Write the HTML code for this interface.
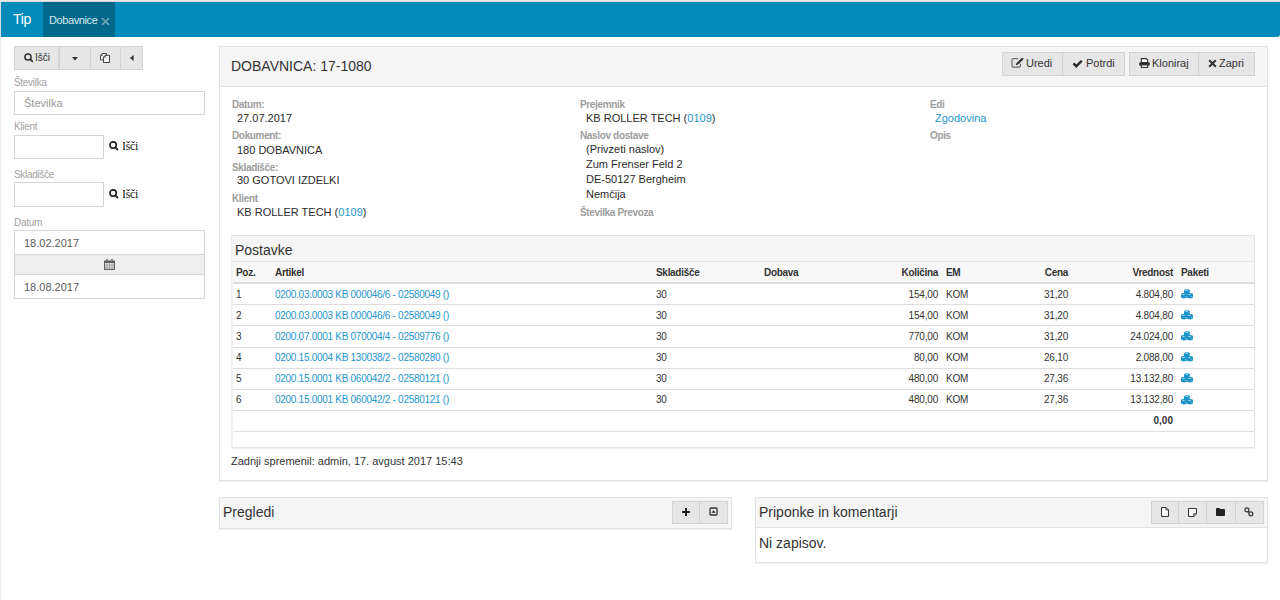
<!DOCTYPE html>
<html><head><meta charset="utf-8">
<style>
*{box-sizing:border-box;margin:0;padding:0}
html,body{width:1280px;height:600px;overflow:hidden;background:#fff}
body{font-family:"Liberation Sans",sans-serif;color:#333;position:relative}
.abs{position:absolute}
#frameTop{left:0;top:0;width:1280px;height:2px;background:#e9e9e9;border-bottom:1px solid #dcd9d6}
#frameLeft{left:0;top:0;width:1px;height:600px;background:#ebebeb}
#frameLeftNav{left:0;top:2px;width:1px;height:35px;background:#cfdde2}
#nav{left:1px;top:2px;width:1279px;height:35px;background:#018bbb;border-bottom-right-radius:3px}
#navTip{left:13px;top:2.4px;height:35px;line-height:35px;font-size:14px;color:#fff;letter-spacing:-0.3px}
#tab{left:43px;top:2px;width:72px;height:35px;background:#00688b}
#tabTxt{left:49px;top:3px;line-height:35px;font-size:11px;color:#d8ebf2;letter-spacing:-0.4px}
.btn{position:absolute;background:#e6e6e6;border:1px solid #d2d2d2;}
.lbl{position:absolute;font-size:10px;color:#999;white-space:nowrap}
.inp{position:absolute;border:1px solid #d6d6d6;background:#fff}
.ph{position:absolute;font-size:12px;color:#999;white-space:nowrap}
.panel{position:absolute;border:1px solid #e3e3e3;background:#fff;box-shadow:0 1px 1px rgba(0,0,0,.05)}
.ph-head{position:absolute;background:#f5f5f5;border-bottom:1px solid #e3e3e3}
.t{position:absolute;white-space:nowrap}
.dl{font-size:10px;font-weight:bold;color:#9d9d9d;letter-spacing:-0.35px}
.dv{font-size:11px;color:#2b2b2b}
a,.lnk{color:#2496cd;text-decoration:none}
</style></head><body>
<div id="frameTop" class="abs"></div>
<div id="frameLeft" class="abs"></div>
<div id="frameLeftNav" class="abs"></div>
<div id="nav" class="abs"></div>
<div id="navTip" class="abs">Tip</div>
<div id="tab" class="abs"></div>
<div id="tabTxt" class="abs">Dobavnice</div>
<svg class="abs" style="left:101px;top:16.6px" width="9" height="9" viewBox="0 0 9 9"><path d="M1 1L8 8M8 1L1 8" stroke="#77a8bc" stroke-width="1.6"/></svg>


<!-- SIDEBAR -->
<div class="btn" style="left:14px;top:46px;width:45px;height:24px"></div>
<div class="btn" style="left:59px;top:46px;width:32px;height:24px"></div>
<div class="btn" style="left:90px;top:46px;width:31px;height:24px"></div>
<div class="btn" style="left:120px;top:46px;width:23px;height:24px"></div>
<svg class="abs" style="left:24px;top:53px" width="10" height="10" viewBox="0 0 10 10"><circle cx="4" cy="4" r="3.1" fill="none" stroke="#333" stroke-width="1.5"/><path d="M6.2 6.2L8.8 8.8" stroke="#333" stroke-width="1.7"/></svg>
<div class="t" style="left:35px;top:52px;font-size:10px;line-height:12px;color:#333">Išči</div>
<svg class="abs" style="left:72px;top:56.8px" width="6" height="4" viewBox="0 0 6 4"><path d="M0 0H6L3 3.6Z" fill="#333"/></svg>
<svg class="abs" style="left:100px;top:53px" width="11" height="10" viewBox="0 0 11 10"><path d="M2.3 0.5H6.5V6.9H0.5V2.3Z" fill="#f0f0f0" stroke="#444" stroke-width="1"/><path d="M2.3 0.5V2.3H0.5" fill="none" stroke="#444" stroke-width="0.8"/><path d="M5.3 2.3H9.5V9.5H3.5V4.1Z" fill="#f4f4f4" stroke="#444" stroke-width="1"/><path d="M5.3 2.3V4.1H3.5" fill="none" stroke="#444" stroke-width="0.8"/></svg>
<svg class="abs" style="left:129.5px;top:55px" width="4" height="6" viewBox="0 0 4 6"><path d="M3.6 0V6L0 3Z" fill="#333"/></svg>

<div class="t" style="left:14px;top:77px;font-size:10px;line-height:12px;color:#a3a3a3;letter-spacing:-0.3px">Številka</div>
<div class="inp" style="left:14px;top:91px;width:191px;height:24px"></div>
<div class="t" style="left:24px;top:96px;font-size:11px;line-height:14px;color:#999">Številka</div>

<div class="t" style="left:14px;top:121px;font-size:10px;line-height:12px;color:#a3a3a3;letter-spacing:-0.3px">Klient</div>
<div class="inp" style="left:14px;top:135px;width:90px;height:24px"></div>
<svg class="abs" style="left:109px;top:141px" width="10" height="10" viewBox="0 0 10 10"><circle cx="4.1" cy="4.1" r="3.2" fill="none" stroke="#222" stroke-width="1.6"/><path d="M6.3 6.3L9 9" stroke="#222" stroke-width="1.8"/></svg>
<div class="t" style="left:122px;top:139px;font-family:'Liberation Serif',serif;font-size:12px;line-height:14px;color:#222;letter-spacing:-0.3px">Išči</div>

<div class="t" style="left:14px;top:169px;font-size:10px;line-height:12px;color:#a3a3a3;letter-spacing:-0.3px">Skladišče</div>
<div class="inp" style="left:14px;top:182px;width:90px;height:25px"></div>
<svg class="abs" style="left:109px;top:189px" width="10" height="10" viewBox="0 0 10 10"><circle cx="4.1" cy="4.1" r="3.2" fill="none" stroke="#222" stroke-width="1.6"/><path d="M6.3 6.3L9 9" stroke="#222" stroke-width="1.8"/></svg>
<div class="t" style="left:122px;top:187px;font-family:'Liberation Serif',serif;font-size:12px;line-height:14px;color:#222;letter-spacing:-0.3px">Išči</div>

<div class="t" style="left:14px;top:217px;font-size:10px;line-height:12px;color:#a3a3a3;letter-spacing:-0.3px">Datum</div>
<div class="inp" style="left:14px;top:230px;width:191px;height:25px"></div>
<div class="t" style="left:24px;top:235.6px;font-size:11px;line-height:14px;color:#5c5c5c">18.02.2017</div>
<div class="abs" style="left:14px;top:254px;width:191px;height:21px;background:#eee;border:1px solid #d6d6d6"></div>
<svg class="abs" style="left:104px;top:259px" width="11" height="11" viewBox="0 0 11 11"><rect x="0.6" y="2.2" width="9.8" height="8.2" fill="#f2f2f2" stroke="#5a5a5a" stroke-width="1.1"/><rect x="0.6" y="2.2" width="9.8" height="1.8" fill="#5a5a5a"/><path d="M2.2 3V1.3Q2.2 0.4 3.1 0.4Q4 0.4 4 1.3V3M7 3V1.3Q7 0.4 7.9 0.4Q8.8 0.4 8.8 1.3V3" fill="none" stroke="#5a5a5a" stroke-width="0.9"/><path d="M3 4V10M5.5 4V10M8 4V10M1 6H10M1 8.2H10" stroke="#8a8a8a" stroke-width="0.7"/></svg>
<div class="inp" style="left:14px;top:274px;width:191px;height:25px"></div>
<div class="t" style="left:24px;top:279.6px;font-size:11px;line-height:14px;color:#5c5c5c">18.08.2017</div>


<!-- MAIN PANEL -->
<div class="panel" style="left:219px;top:46px;width:1049px;height:435px"></div>
<div class="ph-head" style="left:220px;top:47px;width:1047px;height:40px"></div>
<div class="t" style="left:231px;top:58px;font-size:14px;line-height:16px;color:#333">DOBAVNICA: 17-1080</div>

<div class="btn" style="left:1002px;top:52px;width:61px;height:24px"></div>
<div class="btn" style="left:1062px;top:52px;width:63px;height:24px"></div>
<div class="btn" style="left:1129px;top:52px;width:70px;height:24px"></div>
<div class="btn" style="left:1198px;top:52px;width:57px;height:24px"></div>
<svg class="abs" style="left:1011px;top:57px" width="13" height="11" viewBox="0 0 13 11"><path d="M7 1.6H2.3Q1 1.6 1 2.9V8.8Q1 10.1 2.3 10.1H8.2Q9.5 10.1 9.5 8.8V6.8" fill="none" stroke="#6a6a6a" stroke-width="1.2"/><path d="M4.8 8.2L5.3 6.2L10.6 0.9Q11.1 0.5 11.6 0.9L12.3 1.6Q12.7 2.1 12.3 2.6L7 7.8Z" fill="#333"/><path d="M5.6 6.6L6.5 7.5" stroke="#aaa" stroke-width="0.7"/></svg>
<div class="t" style="left:1026px;top:57px;font-size:11px;line-height:13px;color:#333">Uredi</div>
<svg class="abs" style="left:1072px;top:58.5px" width="11" height="10" viewBox="0 0 11 10"><path d="M0.6 5.2L2.3 3.5L4.3 5.5L8.9 0.9L10.6 2.6L4.3 8.9Z" fill="#2a2a2a"/></svg>
<div class="t" style="left:1086px;top:57px;font-size:11px;line-height:13px;color:#333">Potrdi</div>
<svg class="abs" style="left:1138.5px;top:58px" width="11" height="10" viewBox="0 0 11 10"><path d="M2.3 0.6H7.2L8.7 2.1V4.6H2.3Z" fill="#fff" stroke="#333" stroke-width="1.1"/><path d="M1.2 4.3H9.8Q10.7 4.3 10.7 5.2V7.4H0.3V5.2Q0.3 4.3 1.2 4.3Z" fill="#2a2a2a"/><rect x="2.3" y="6.9" width="6.4" height="2.5" fill="#fff" stroke="#333" stroke-width="1.1"/></svg>
<div class="t" style="left:1152px;top:57px;font-size:11px;line-height:13px;color:#333">Kloniraj</div>
<svg class="abs" style="left:1208px;top:59px" width="9" height="9" viewBox="0 0 9 9"><path d="M1.2 1.2L7.8 7.8M7.8 1.2L1.2 7.8" stroke="#333" stroke-width="2"/></svg>
<div class="t" style="left:1219px;top:57px;font-size:11px;line-height:13px;color:#333">Zapri</div>

<!-- details -->
<div class="t dl" style="left:232px;top:99px;line-height:12px">Datum:</div>
<div class="t dv" style="left:237px;top:112px;line-height:13px">27.07.2017</div>
<div class="t dl" style="left:232px;top:130px;line-height:12px">Dokument:</div>
<div class="t dv" style="left:237px;top:143.5px;line-height:13px">180 DOBAVNICA</div>
<div class="t dl" style="left:232px;top:161.5px;line-height:12px">Skladišče:</div>
<div class="t dv" style="left:237px;top:174px;line-height:13px">30 GOTOVI IZDELKI</div>
<div class="t dl" style="left:232px;top:193px;line-height:12px">Klient</div>
<div class="t dv" style="left:237px;top:206px;line-height:13px">KB ROLLER TECH (<span class="lnk">0109</span>)</div>

<div class="t dl" style="left:580px;top:99px;line-height:12px">Prejemnik</div>
<div class="t dv" style="left:586px;top:112px;line-height:13px">KB ROLLER TECH (<span class="lnk">0109</span>)</div>
<div class="t dl" style="left:580px;top:130px;line-height:12px">Naslov dostave</div>
<div class="t dv" style="left:586px;top:143px;line-height:13px">(Privzeti naslov)</div>
<div class="t dv" style="left:586px;top:157.6px;line-height:13px">Zum Frenser Feld 2</div>
<div class="t dv" style="left:586px;top:172.6px;line-height:13px">DE-50127 Bergheim</div>
<div class="t dv" style="left:586px;top:187.6px;line-height:13px">Nemčija</div>
<div class="t dl" style="left:580px;top:206.6px;line-height:12px">Številka Prevoza</div>

<div class="t dl" style="left:930px;top:99px;line-height:12px">Edi</div>
<div class="t dv lnk" style="left:935px;top:112px;line-height:13px">Zgodovina</div>
<div class="t dl" style="left:930px;top:130px;line-height:12px">Opis</div>

<!-- POSTAVKE -->
<div class="panel" style="left:231px;top:235px;width:1024px;height:213px;border-left-color:#efefef;border-bottom-left-radius:3px"></div>
<div class="abs" style="left:232px;top:236px;width:1px;height:211px;background:rgba(0,0,0,0.045)"></div>
<div class="ph-head" style="left:233px;top:236px;width:1021px;height:26px"></div>
<div class="t" style="left:235px;top:242px;font-size:14px;line-height:16px;color:#333">Postavke</div>
<div class="abs" style="left:233px;top:262px;width:1021px;height:20px;background:#f8f8f8"></div>
<div class="abs" style="left:233px;top:282px;width:1021px;height:2px;background:#ddd"></div>
<div class="t" style="left:236px;font-size:10px;font-weight:bold;line-height:12px;color:#333;letter-spacing:-0.3px;top:266.5px">Poz.</div>
<div class="t" style="left:275px;font-size:10px;font-weight:bold;line-height:12px;color:#333;letter-spacing:-0.3px;top:266.5px">Artikel</div>
<div class="t" style="left:656px;font-size:10px;font-weight:bold;line-height:12px;color:#333;letter-spacing:-0.3px;top:266.5px">Skladišče</div>
<div class="t" style="left:764px;font-size:10px;font-weight:bold;line-height:12px;color:#333;letter-spacing:-0.3px;top:266.5px">Dobava</div>
<div class="t" style="right:342px;font-size:10px;font-weight:bold;line-height:12px;color:#333;letter-spacing:-0.3px;top:266.5px">Količina</div>
<div class="t" style="left:946px;font-size:10px;font-weight:bold;line-height:12px;color:#333;letter-spacing:-0.3px;top:266.5px">EM</div>
<div class="t" style="right:212px;font-size:10px;font-weight:bold;line-height:12px;color:#333;letter-spacing:-0.3px;top:266.5px">Cena</div>
<div class="t" style="right:107px;font-size:10px;font-weight:bold;line-height:12px;color:#333;letter-spacing:-0.3px;top:266.5px">Vrednost</div>
<div class="t" style="left:1181px;font-size:10px;font-weight:bold;line-height:12px;color:#333;letter-spacing:-0.3px;top:266.5px">Paketi</div>
<div class="abs" style="left:233px;top:304.17px;width:1021px;height:1px;background:#ddd"></div>
<div class="t" style="left:236px;font-size:10px;line-height:12px;color:#333;letter-spacing:-0.2px;top:288.50px">1</div>
<div class="t lnk" style="left:275px;font-size:10px;line-height:12px;color:#333;letter-spacing:-0.2px;top:288.50px;letter-spacing:-0.28px;color:#2496cd">0200.03.0003 KB 000046/6 - 02580049 ()</div>
<div class="t" style="left:656px;font-size:10px;line-height:12px;color:#333;letter-spacing:-0.2px;top:288.50px">30</div>
<div class="t" style="right:342px;font-size:10px;line-height:12px;color:#333;letter-spacing:-0.2px;top:288.50px">154,00</div>
<div class="t" style="left:946px;font-size:10px;line-height:12px;color:#333;letter-spacing:-0.2px;top:288.50px">KOM</div>
<div class="t" style="right:212px;font-size:10px;line-height:12px;color:#333;letter-spacing:-0.2px;top:288.50px">31,20</div>
<div class="t" style="right:107px;font-size:10px;line-height:12px;color:#333;letter-spacing:-0.2px;top:288.50px">4.804,80</div>
<svg class="abs" style="left:1181px;top:288.80px" width="12" height="10" viewBox="0 0 12 10"><g fill="#1b93c9"><path d="M3 1.3Q3 0.4 6 0.2Q9 0.4 9 1.3V4Q9 5 6 5.2Q3 5 3 4Z"/><path d="M0 5.3Q0 4.2 3 4.1Q6 4.2 6 5.3V8.2Q6 9.3 3 9.4Q0 9.3 0 8.2Z"/><path d="M6 5.3Q6 4.2 9 4.1Q12 4.2 12 5.3V8.2Q12 9.3 9 9.4Q6 9.3 6 8.2Z"/></g><g fill="#bfe3f3"><ellipse cx="5.6" cy="1.3" rx="1.4" ry="0.55"/><ellipse cx="2.6" cy="5.4" rx="1.3" ry="0.5"/><ellipse cx="8.6" cy="5.4" rx="1.3" ry="0.5"/><rect x="7.6" y="2.6" width="0.9" height="0.9"/><rect x="4.4" y="7" width="0.9" height="0.9"/><rect x="10.4" y="7" width="0.9" height="0.9"/></g></svg>
<div class="abs" style="left:233px;top:325.34px;width:1021px;height:1px;background:#ddd"></div>
<div class="t" style="left:236px;font-size:10px;line-height:12px;color:#333;letter-spacing:-0.2px;top:309.67px">2</div>
<div class="t lnk" style="left:275px;font-size:10px;line-height:12px;color:#333;letter-spacing:-0.2px;top:309.67px;letter-spacing:-0.28px;color:#2496cd">0200.03.0003 KB 000046/6 - 02580049 ()</div>
<div class="t" style="left:656px;font-size:10px;line-height:12px;color:#333;letter-spacing:-0.2px;top:309.67px">30</div>
<div class="t" style="right:342px;font-size:10px;line-height:12px;color:#333;letter-spacing:-0.2px;top:309.67px">154,00</div>
<div class="t" style="left:946px;font-size:10px;line-height:12px;color:#333;letter-spacing:-0.2px;top:309.67px">KOM</div>
<div class="t" style="right:212px;font-size:10px;line-height:12px;color:#333;letter-spacing:-0.2px;top:309.67px">31,20</div>
<div class="t" style="right:107px;font-size:10px;line-height:12px;color:#333;letter-spacing:-0.2px;top:309.67px">4.804,80</div>
<svg class="abs" style="left:1181px;top:309.97px" width="12" height="10" viewBox="0 0 12 10"><g fill="#1b93c9"><path d="M3 1.3Q3 0.4 6 0.2Q9 0.4 9 1.3V4Q9 5 6 5.2Q3 5 3 4Z"/><path d="M0 5.3Q0 4.2 3 4.1Q6 4.2 6 5.3V8.2Q6 9.3 3 9.4Q0 9.3 0 8.2Z"/><path d="M6 5.3Q6 4.2 9 4.1Q12 4.2 12 5.3V8.2Q12 9.3 9 9.4Q6 9.3 6 8.2Z"/></g><g fill="#bfe3f3"><ellipse cx="5.6" cy="1.3" rx="1.4" ry="0.55"/><ellipse cx="2.6" cy="5.4" rx="1.3" ry="0.5"/><ellipse cx="8.6" cy="5.4" rx="1.3" ry="0.5"/><rect x="7.6" y="2.6" width="0.9" height="0.9"/><rect x="4.4" y="7" width="0.9" height="0.9"/><rect x="10.4" y="7" width="0.9" height="0.9"/></g></svg>
<div class="abs" style="left:233px;top:346.51px;width:1021px;height:1px;background:#ddd"></div>
<div class="t" style="left:236px;font-size:10px;line-height:12px;color:#333;letter-spacing:-0.2px;top:330.84px">3</div>
<div class="t lnk" style="left:275px;font-size:10px;line-height:12px;color:#333;letter-spacing:-0.2px;top:330.84px;letter-spacing:-0.28px;color:#2496cd">0200.07.0001 KB 070004/4 - 02509776 ()</div>
<div class="t" style="left:656px;font-size:10px;line-height:12px;color:#333;letter-spacing:-0.2px;top:330.84px">30</div>
<div class="t" style="right:342px;font-size:10px;line-height:12px;color:#333;letter-spacing:-0.2px;top:330.84px">770,00</div>
<div class="t" style="left:946px;font-size:10px;line-height:12px;color:#333;letter-spacing:-0.2px;top:330.84px">KOM</div>
<div class="t" style="right:212px;font-size:10px;line-height:12px;color:#333;letter-spacing:-0.2px;top:330.84px">31,20</div>
<div class="t" style="right:107px;font-size:10px;line-height:12px;color:#333;letter-spacing:-0.2px;top:330.84px">24.024,00</div>
<svg class="abs" style="left:1181px;top:331.14px" width="12" height="10" viewBox="0 0 12 10"><g fill="#1b93c9"><path d="M3 1.3Q3 0.4 6 0.2Q9 0.4 9 1.3V4Q9 5 6 5.2Q3 5 3 4Z"/><path d="M0 5.3Q0 4.2 3 4.1Q6 4.2 6 5.3V8.2Q6 9.3 3 9.4Q0 9.3 0 8.2Z"/><path d="M6 5.3Q6 4.2 9 4.1Q12 4.2 12 5.3V8.2Q12 9.3 9 9.4Q6 9.3 6 8.2Z"/></g><g fill="#bfe3f3"><ellipse cx="5.6" cy="1.3" rx="1.4" ry="0.55"/><ellipse cx="2.6" cy="5.4" rx="1.3" ry="0.5"/><ellipse cx="8.6" cy="5.4" rx="1.3" ry="0.5"/><rect x="7.6" y="2.6" width="0.9" height="0.9"/><rect x="4.4" y="7" width="0.9" height="0.9"/><rect x="10.4" y="7" width="0.9" height="0.9"/></g></svg>
<div class="abs" style="left:233px;top:367.68px;width:1021px;height:1px;background:#ddd"></div>
<div class="t" style="left:236px;font-size:10px;line-height:12px;color:#333;letter-spacing:-0.2px;top:352.01px">4</div>
<div class="t lnk" style="left:275px;font-size:10px;line-height:12px;color:#333;letter-spacing:-0.2px;top:352.01px;letter-spacing:-0.28px;color:#2496cd">0200.15.0004 KB 130038/2 - 02580280 ()</div>
<div class="t" style="left:656px;font-size:10px;line-height:12px;color:#333;letter-spacing:-0.2px;top:352.01px">30</div>
<div class="t" style="right:342px;font-size:10px;line-height:12px;color:#333;letter-spacing:-0.2px;top:352.01px">80,00</div>
<div class="t" style="left:946px;font-size:10px;line-height:12px;color:#333;letter-spacing:-0.2px;top:352.01px">KOM</div>
<div class="t" style="right:212px;font-size:10px;line-height:12px;color:#333;letter-spacing:-0.2px;top:352.01px">26,10</div>
<div class="t" style="right:107px;font-size:10px;line-height:12px;color:#333;letter-spacing:-0.2px;top:352.01px">2.088,00</div>
<svg class="abs" style="left:1181px;top:352.31px" width="12" height="10" viewBox="0 0 12 10"><g fill="#1b93c9"><path d="M3 1.3Q3 0.4 6 0.2Q9 0.4 9 1.3V4Q9 5 6 5.2Q3 5 3 4Z"/><path d="M0 5.3Q0 4.2 3 4.1Q6 4.2 6 5.3V8.2Q6 9.3 3 9.4Q0 9.3 0 8.2Z"/><path d="M6 5.3Q6 4.2 9 4.1Q12 4.2 12 5.3V8.2Q12 9.3 9 9.4Q6 9.3 6 8.2Z"/></g><g fill="#bfe3f3"><ellipse cx="5.6" cy="1.3" rx="1.4" ry="0.55"/><ellipse cx="2.6" cy="5.4" rx="1.3" ry="0.5"/><ellipse cx="8.6" cy="5.4" rx="1.3" ry="0.5"/><rect x="7.6" y="2.6" width="0.9" height="0.9"/><rect x="4.4" y="7" width="0.9" height="0.9"/><rect x="10.4" y="7" width="0.9" height="0.9"/></g></svg>
<div class="abs" style="left:233px;top:388.85px;width:1021px;height:1px;background:#ddd"></div>
<div class="t" style="left:236px;font-size:10px;line-height:12px;color:#333;letter-spacing:-0.2px;top:373.18px">5</div>
<div class="t lnk" style="left:275px;font-size:10px;line-height:12px;color:#333;letter-spacing:-0.2px;top:373.18px;letter-spacing:-0.28px;color:#2496cd">0200.15.0001 KB 060042/2 - 02580121 ()</div>
<div class="t" style="left:656px;font-size:10px;line-height:12px;color:#333;letter-spacing:-0.2px;top:373.18px">30</div>
<div class="t" style="right:342px;font-size:10px;line-height:12px;color:#333;letter-spacing:-0.2px;top:373.18px">480,00</div>
<div class="t" style="left:946px;font-size:10px;line-height:12px;color:#333;letter-spacing:-0.2px;top:373.18px">KOM</div>
<div class="t" style="right:212px;font-size:10px;line-height:12px;color:#333;letter-spacing:-0.2px;top:373.18px">27,36</div>
<div class="t" style="right:107px;font-size:10px;line-height:12px;color:#333;letter-spacing:-0.2px;top:373.18px">13.132,80</div>
<svg class="abs" style="left:1181px;top:373.48px" width="12" height="10" viewBox="0 0 12 10"><g fill="#1b93c9"><path d="M3 1.3Q3 0.4 6 0.2Q9 0.4 9 1.3V4Q9 5 6 5.2Q3 5 3 4Z"/><path d="M0 5.3Q0 4.2 3 4.1Q6 4.2 6 5.3V8.2Q6 9.3 3 9.4Q0 9.3 0 8.2Z"/><path d="M6 5.3Q6 4.2 9 4.1Q12 4.2 12 5.3V8.2Q12 9.3 9 9.4Q6 9.3 6 8.2Z"/></g><g fill="#bfe3f3"><ellipse cx="5.6" cy="1.3" rx="1.4" ry="0.55"/><ellipse cx="2.6" cy="5.4" rx="1.3" ry="0.5"/><ellipse cx="8.6" cy="5.4" rx="1.3" ry="0.5"/><rect x="7.6" y="2.6" width="0.9" height="0.9"/><rect x="4.4" y="7" width="0.9" height="0.9"/><rect x="10.4" y="7" width="0.9" height="0.9"/></g></svg>
<div class="abs" style="left:233px;top:410.02px;width:1021px;height:1px;background:#ddd"></div>
<div class="t" style="left:236px;font-size:10px;line-height:12px;color:#333;letter-spacing:-0.2px;top:394.35px">6</div>
<div class="t lnk" style="left:275px;font-size:10px;line-height:12px;color:#333;letter-spacing:-0.2px;top:394.35px;letter-spacing:-0.28px;color:#2496cd">0200.15.0001 KB 060042/2 - 02580121 ()</div>
<div class="t" style="left:656px;font-size:10px;line-height:12px;color:#333;letter-spacing:-0.2px;top:394.35px">30</div>
<div class="t" style="right:342px;font-size:10px;line-height:12px;color:#333;letter-spacing:-0.2px;top:394.35px">480,00</div>
<div class="t" style="left:946px;font-size:10px;line-height:12px;color:#333;letter-spacing:-0.2px;top:394.35px">KOM</div>
<div class="t" style="right:212px;font-size:10px;line-height:12px;color:#333;letter-spacing:-0.2px;top:394.35px">27,36</div>
<div class="t" style="right:107px;font-size:10px;line-height:12px;color:#333;letter-spacing:-0.2px;top:394.35px">13.132,80</div>
<svg class="abs" style="left:1181px;top:394.65px" width="12" height="10" viewBox="0 0 12 10"><g fill="#1b93c9"><path d="M3 1.3Q3 0.4 6 0.2Q9 0.4 9 1.3V4Q9 5 6 5.2Q3 5 3 4Z"/><path d="M0 5.3Q0 4.2 3 4.1Q6 4.2 6 5.3V8.2Q6 9.3 3 9.4Q0 9.3 0 8.2Z"/><path d="M6 5.3Q6 4.2 9 4.1Q12 4.2 12 5.3V8.2Q12 9.3 9 9.4Q6 9.3 6 8.2Z"/></g><g fill="#bfe3f3"><ellipse cx="5.6" cy="1.3" rx="1.4" ry="0.55"/><ellipse cx="2.6" cy="5.4" rx="1.3" ry="0.5"/><ellipse cx="8.6" cy="5.4" rx="1.3" ry="0.5"/><rect x="7.6" y="2.6" width="0.9" height="0.9"/><rect x="4.4" y="7" width="0.9" height="0.9"/><rect x="10.4" y="7" width="0.9" height="0.9"/></g></svg>
<div class="t" style="right:107px;font-size:10px;font-weight:bold;line-height:12px;color:#333;top:415.02px">0,00</div>
<div class="abs" style="left:233px;top:431.19px;width:1021px;height:1px;background:#ddd"></div>
<div class="t" style="left:231px;top:455px;font-size:11px;line-height:13px;color:#333">Zadnji spremenil: admin, 17. avgust 2017 15:43</div>

<!-- PREGLEDI -->
<div class="panel" style="left:219px;top:497px;width:513px;height:32px;background:#f5f5f5"></div>
<div class="t" style="left:223px;top:504px;font-size:14px;line-height:16px;color:#333">Pregledi</div>
<div class="btn" style="left:672px;top:501px;width:29px;height:23px"></div>
<div class="btn" style="left:699px;top:501px;width:29px;height:23px"></div>
<svg class="abs" style="left:682px;top:507.5px" width="8" height="8" viewBox="0 0 8 8"><path d="M4 0V8M0 4H8" stroke="#222" stroke-width="2"/></svg>
<svg class="abs" style="left:709px;top:507px" width="9" height="9" viewBox="0 0 9 9"><rect x="1" y="1" width="7" height="7" rx="1" fill="none" stroke="#333" stroke-width="1.3"/><path d="M2.5 5.8H6.5L4.5 3.2Z" fill="#222"/></svg>

<!-- PRIPONKE -->
<div class="panel" style="left:755px;top:497px;width:513px;height:66px"></div>
<div class="ph-head" style="left:756px;top:498px;width:511px;height:30px"></div>
<div class="t" style="left:759px;top:504px;font-size:14px;line-height:16px;color:#333">Priponke in komentarji</div>
<div class="btn" style="left:1151px;top:501px;width:28px;height:23px"></div>
<div class="btn" style="left:1178px;top:501px;width:29px;height:23px"></div>
<div class="btn" style="left:1206px;top:501px;width:30px;height:23px"></div>
<div class="btn" style="left:1235px;top:501px;width:29px;height:23px"></div>
<svg class="abs" style="left:1161px;top:507px" width="8" height="10" viewBox="0 0 8 10"><path d="M0.5 0.5H5L7.5 3V9.5H0.5Z" fill="#fff" stroke="#333" stroke-width="1"/><path d="M5 0.5V3H7.5" fill="none" stroke="#333" stroke-width="0.9"/></svg>
<svg class="abs" style="left:1188px;top:507.5px" width="9" height="9" viewBox="0 0 9 9"><path d="M0.5 0.5H8.5V5.8L5.8 8.5H0.5Z" fill="#f8f8f8" stroke="#333" stroke-width="1"/><path d="M5.8 8.5V5.8H8.5" fill="none" stroke="#333" stroke-width="0.9"/></svg>
<svg class="abs" style="left:1216px;top:508px" width="9" height="8" viewBox="0 0 9 8"><path d="M0 0.8Q0 0 0.8 0H3.3L4.2 1.1H8.2Q9 1.1 9 1.9V7.2Q9 8 8.2 8H0.8Q0 8 0 7.2Z" fill="#222"/></svg>
<svg class="abs" style="left:1244px;top:507px" width="10" height="10" viewBox="0 0 10 10"><circle cx="2.9" cy="2.9" r="2" fill="none" stroke="#333" stroke-width="1.2"/><circle cx="6.8" cy="6.8" r="2" fill="none" stroke="#333" stroke-width="1.2"/><path d="M4.3 4.3L5.4 5.4" stroke="#333" stroke-width="1.2"/></svg>
<div class="t" style="left:759px;top:535px;font-size:14px;line-height:16px;color:#333">Ni zapisov.</div>

</body></html>
